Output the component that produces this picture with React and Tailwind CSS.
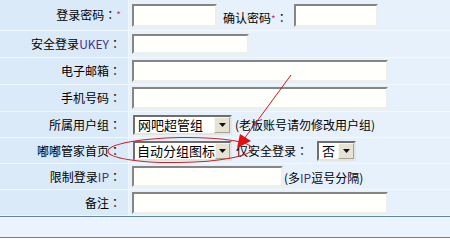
import React from 'react';

const FONT = { fontFamily: '"Noto Sans CJK SC", "Liberation Sans", sans-serif' };
const JP = { fontFamily: '"Noto Sans CJK JP", "Noto Sans CJK SC", sans-serif' };

function Field({ className = '' }) {
  return (
    <div
      className={`shrink-0 border-2 border-t-[#858585] border-l-[#858585] border-r-[#eeeeea] border-b-[#eeeeea] bg-[#fffffc] ${className}`}
    />
  );
}

function Select({ value, width, textPad = 'pl-[3px]' }) {
  return (
    <div
      className={`flex h-[20px] shrink-0 items-stretch border-2 border-t-[#6e6e6e] border-l-[#6e6e6e] border-r-[#e4e4e0] border-b-[#e4e4e0] bg-white ${width}`}
    >
      <span className={`flex flex-1 items-center whitespace-nowrap text-[13px] leading-none text-black ${textPad}`}>{value}</span>
      <span className="flex w-[16px] items-center justify-center border border-t-[#f7f6f0] border-l-[#f7f6f0] border-r-[#a7a391] border-b-[#a7a391] bg-[#e6e2d4]">
        <svg width="7" height="4" viewBox="0 0 7 4">
          <path d="M0 0H7L3.5 4Z" fill="#111" />
        </svg>
      </span>
    </div>
  );
}

function Row({ label, h, children }) {
  return (
    <div className={`flex border-b border-[#f1f8fe] ${h}`}>
      <div className="flex w-[129px] shrink-0 items-center justify-end whitespace-nowrap border-r border-[#eef6fe] bg-[#dbeaf9] pr-[7px] text-[12px] text-black">
        {label}
      </div>
      <div className="flex flex-1 items-center bg-[#e6f1fc] pl-[3px] text-[12px] text-black">{children}</div>
    </div>
  );
}

const Colon = () => <span style={JP}>：</span>;
const Star = () => <span className="text-[10px] leading-none text-[#cc3366]">*</span>;
const Latin = ({ children }) => <span className="text-[#3e3486]">{children}</span>;

export default function App() {
  return (
    <div className="relative h-[245px] w-[450px] overflow-hidden bg-white" style={FONT}>
      <Row h="h-[31px]" label={<>登录密码<Colon /><Star /></>}>
        <Field className="h-[23px] w-[85px]" />
        <span className="ml-[6px] mt-[6px] whitespace-nowrap">确认密码<Star /><Colon /></span>
        <Field className="ml-[6px] h-[23px] w-[84px]" />
      </Row>
      <Row h="h-[27px]" label={<>安全登录<Latin>UKEY</Latin><Colon /></>}>
        <Field className="h-[20px] w-[117px]" />
      </Row>
      <Row h="h-[27px]" label={<>电子邮箱<Colon /></>}>
        <Field className="h-[22px] w-[256px]" />
      </Row>
      <Row h="h-[27px]" label={<>手机号码<Colon /></>}>
        <Field className="h-[22px] w-[256px]" />
      </Row>
      <Row h="h-[26px]" label={<>所属用户组<Colon /></>}>
        <Select value="网吧超管组" width="w-[99px] ml-[1px]" />
        <span className="ml-[3px] whitespace-nowrap">(老板账号请勿修改用户组)</span>
      </Row>
      <Row h="h-[26px]" label={<>嘟嘟管家首页<Colon /></>}>
        <Select value="自动分组图标" width="w-[99px] ml-[1px]" textPad="pl-[2px]" />
        <span className="ml-[4px] whitespace-nowrap">仅安全登录<Colon /></span>
        <span className="ml-[9px]">
          <Select value="否" width="w-[39px]" />
        </span>
      </Row>
      <Row h="h-[26px]" label={<>限制登录<Latin>IP</Latin><Colon /></>}>
        <Field className="h-[21px] w-[151px]" />
        <span className="ml-[1px] mt-[2px] whitespace-nowrap">
          (多<Latin>IP</Latin>逗号分隔)
        </span>
      </Row>
      <Row h="h-[26px]" label={<>备注<Colon /></>}>
        <Field className="h-[22px] w-[256px]" />
      </Row>
      <div className="h-[22px] border-y border-[#5f87a5] bg-[#eaf3fe]" />

      <svg className="pointer-events-none absolute left-0 top-0" width="450" height="245" viewBox="0 0 450 245">
        <ellipse cx="180" cy="150" rx="72" ry="12.5" fill="none" stroke="#c8242c" strokeWidth="1" transform="rotate(-1 180 150)" />
        <line x1="291" y1="75" x2="244" y2="139" stroke="#d01818" strokeWidth="1" />
        <path d="M237 148 L240 134 L251 141 Z" fill="#e01010" />
      </svg>
    </div>
  );
}
